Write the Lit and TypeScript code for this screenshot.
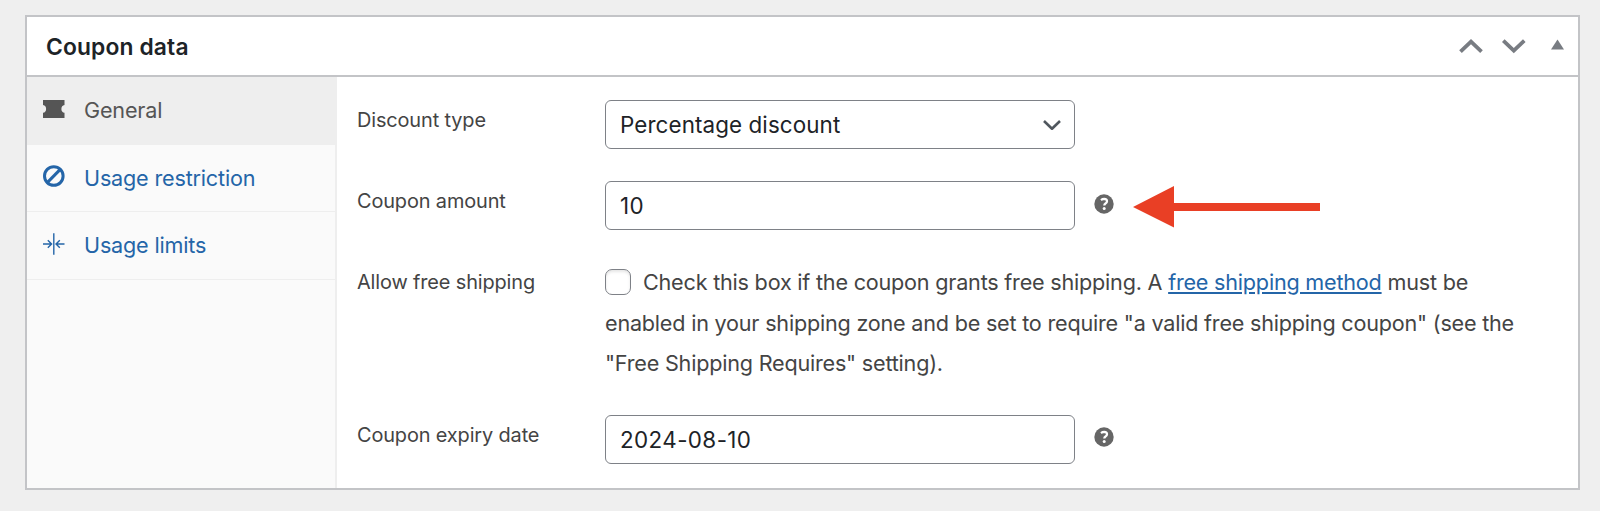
import { LitElement, html, css, svg } from 'lit';
import { customElement, property, state } from 'lit/decorators.js';
import { classMap } from 'lit/directives/class-map.js';

const icons = {
  general: svg`<path d="M0 0H21.5V5A4 4 0 0 0 21.5 12.8V18H0V12.8A4 4 0 0 0 0 5Z" transform="translate(0 2)" fill="currentColor"/>`,
  restriction: svg`<g fill="none" stroke="currentColor" stroke-width="3"><circle cx="10.8" cy="11" r="9.3"/><path d="M17 4.6L4.5 17.4"/></g>`,
  limits: svg`<g fill="none" stroke="currentColor" stroke-width="1.4"><path d="M10.8 0.3V21.7M0 11H8.4M21.5 11H13.2M4.8 7.2L8.6 11L4.8 14.8M16.8 7.2L13 11L16.8 14.8"/></g>`,
};

@customElement('help-tip')
class HelpTip extends LitElement {
  static styles = css`
    :host {
      display: block;
      width: 20px;
      height: 20px;
    }

    svg {
      display: block;
    }
  `;

  render() {
    return html`
      <svg width="20" height="20" viewBox="0 0 20 20">
        <circle cx="10" cy="10" r="9.7" fill="#666" />
        <path d="M7 6.1Q8.5 4.9 10.2 4.9Q13 5 13 7.3Q13 8.6 11.5 9.5Q10.3 10.2 10.3 11.6" fill="none" stroke="#fff" stroke-width="2.3" />
        <circle cx="10.2" cy="14.5" r="1.5" fill="#fff" />
      </svg>
    `;
  }
}

@customElement('form-field')
class FormField extends LitElement {
  @property() label = '';

  static styles = css`
    :host {
      display: grid;
      grid-template-columns: 248px 1fr;
      align-items: start;
    }

    .label {
      font-size: 19.9px;
      line-height: 41px;
      letter-spacing: -0.12px;
    }

    .control {
      display: flex;
      align-items: center;
      gap: 19px;
    }
  `;

  render() {
    return html`
      <div class="label">${this.label}</div>
      <div class="control"><slot></slot></div>
    `;
  }
}

@customElement('app-root')
class AppRoot extends LitElement {
  @state() tab = 'general';

  tabs = [
    { id: 'general', label: 'General', icon: icons.general },
    { id: 'restriction', label: 'Usage restriction', icon: icons.restriction },
    { id: 'limits', label: 'Usage limits', icon: icons.limits },
  ];

  static styles = css`
    :host {
      display: block;
      box-sizing: border-box;
      height: 511px;
      padding: 15px 20px 21px 25px;
      background: #efefef;
      color: #444;
      font-family: Inter, 'Liberation Sans', sans-serif;
    }

    * {
      box-sizing: border-box;
    }

    .panel {
      display: flex;
      flex-direction: column;
      height: 475px;
      background: #fff;
      border: 2px solid #c3c4c7;
    }

    .header {
      display: flex;
      flex: none;
      align-items: center;
      justify-content: space-between;
      height: 60px;
      padding: 0 9px 0 19px;
      border-bottom: 2px solid #c3c4c7;
    }

    .title {
      margin: 0;
      color: #1d2327;
      font-size: 22.8px;
      font-weight: 600;
      letter-spacing: 0.15px;
    }

    .actions {
      display: flex;
      color: #787c82;
    }

    .actions svg,
    .icon {
      display: block;
    }

    .body {
      display: flex;
      flex: 1;
      min-height: 0;
    }

    .tabs {
      width: 310px;
      background: #fafafa;
      border-right: 2px solid #eee;
    }

    .tab {
      display: flex;
      align-items: center;
      gap: 19px;
      width: 308px;
      height: 67.6px;
      padding: 0 16px;
      border-bottom: 1.5px solid #eee;
      color: #2465a8;
      font-size: 21.6px;
      letter-spacing: -0.18px;
      cursor: pointer;
    }

    .tab.active {
      width: 310px;
      background: #eee;
      color: #555;
    }

    .icon {
      margin-top: -3px;
    }

    .fields {
      display: flex;
      flex: 1;
      flex-direction: column;
      padding: 23px 20px 0;
    }

    form-field {
      margin-bottom: 32px;
    }

    .shipping {
      margin-bottom: 31px;
    }

    .select {
      display: grid;
      align-items: center;
    }

    .select > * {
      grid-area: 1 / 1;
    }

    .select svg {
      justify-self: end;
      margin-right: 13px;
      pointer-events: none;
    }

    .input {
      width: 470px;
      height: 49px;
      margin: 0;
      padding: 0 14px;
      appearance: none;
      background: #fff;
      border: 1.5px solid #7e8187;
      border-radius: 6px;
      color: #1d2327;
      font: 22.4px Inter, 'Liberation Sans', sans-serif;
      letter-spacing: 0.1px;
    }

    input.input {
      letter-spacing: 0.4px;
    }

    help-tip {
      margin-bottom: 4px;
    }

    .description {
      width: 920px;
      margin: 0;
      font-size: 21.6px;
      line-height: 40.5px;
      letter-spacing: -0.21px;
    }

    .checkbox {
      width: 26px;
      height: 26px;
      margin: 0 12px 0 0;
      appearance: none;
      vertical-align: -5px;
      background: #fff;
      border: 1.5px solid #7e8187;
      border-radius: 7px;
      box-shadow: inset 0 2px 3px rgba(0, 0, 0, 0.1);
    }

    .link {
      color: #2465a8;
      text-underline-offset: 2px;
    }

    .arrow {
      display: block;
      margin-top: 3px;
    }
  `;

  render() {
    return html`
      <div class="panel">
        <div class="header">
          <h2 class="title">Coupon data</h2>
          <div class="actions">
            <svg width="120" height="20" viewBox="0 0 120 20">
              <path d="M11.5 15.7L22 5.7L32.5 15.7M54.3 4.7L64.8 14.7L75.3 4.7" fill="none" stroke="currentColor" stroke-width="3.8" />
              <path d="M108.5 3.5L115 13.5H102Z" fill="currentColor" />
            </svg>
          </div>
        </div>
        <div class="body">
          <div class="tabs">
            ${this.tabs.map(
              (tab) => html`
                <div class=${classMap({ tab: true, active: tab.id === this.tab })} @click=${() => (this.tab = tab.id)}>
                  <svg class="icon" width="22" height="22" viewBox="0 0 22 22">${tab.icon}</svg>
                  <span>${tab.label}</span>
                </div>
              `
            )}
          </div>
          <div class="fields">
            <form-field label="Discount type">
              <div class="select">
                <select class="input">
                  <option>Percentage discount</option>
                </select>
                <svg width="20" height="12" viewBox="0 0 20 12">
                  <path d="M2 2L10 9.7L18 2" fill="none" stroke="#50575e" stroke-width="2.6" stroke-linejoin="round" />
                </svg>
              </div>
            </form-field>
            <form-field label="Coupon amount">
              <input class="input" type="text" value="10" />
              <help-tip></help-tip>
              <svg class="arrow" width="188" height="42" viewBox="0 0 188 42">
                <path d="M0 21L41 0V17H187V25H41V41.5Z" fill="#e93f25" />
              </svg>
            </form-field>
            <form-field class="shipping" label="Allow free shipping">
              <p class="description"><input class="checkbox" type="checkbox" />Check this box if the coupon grants free shipping. A <a class="link" href="#">free shipping method</a> must be enabled in your shipping zone and be set to require "a valid free shipping coupon" (see the "Free Shipping Requires" setting).</p>
            </form-field>
            <form-field label="Coupon expiry date">
              <input class="input" type="text" value="2024-08-10" />
              <help-tip></help-tip>
            </form-field>
          </div>
        </div>
      </div>
    `;
  }
}
